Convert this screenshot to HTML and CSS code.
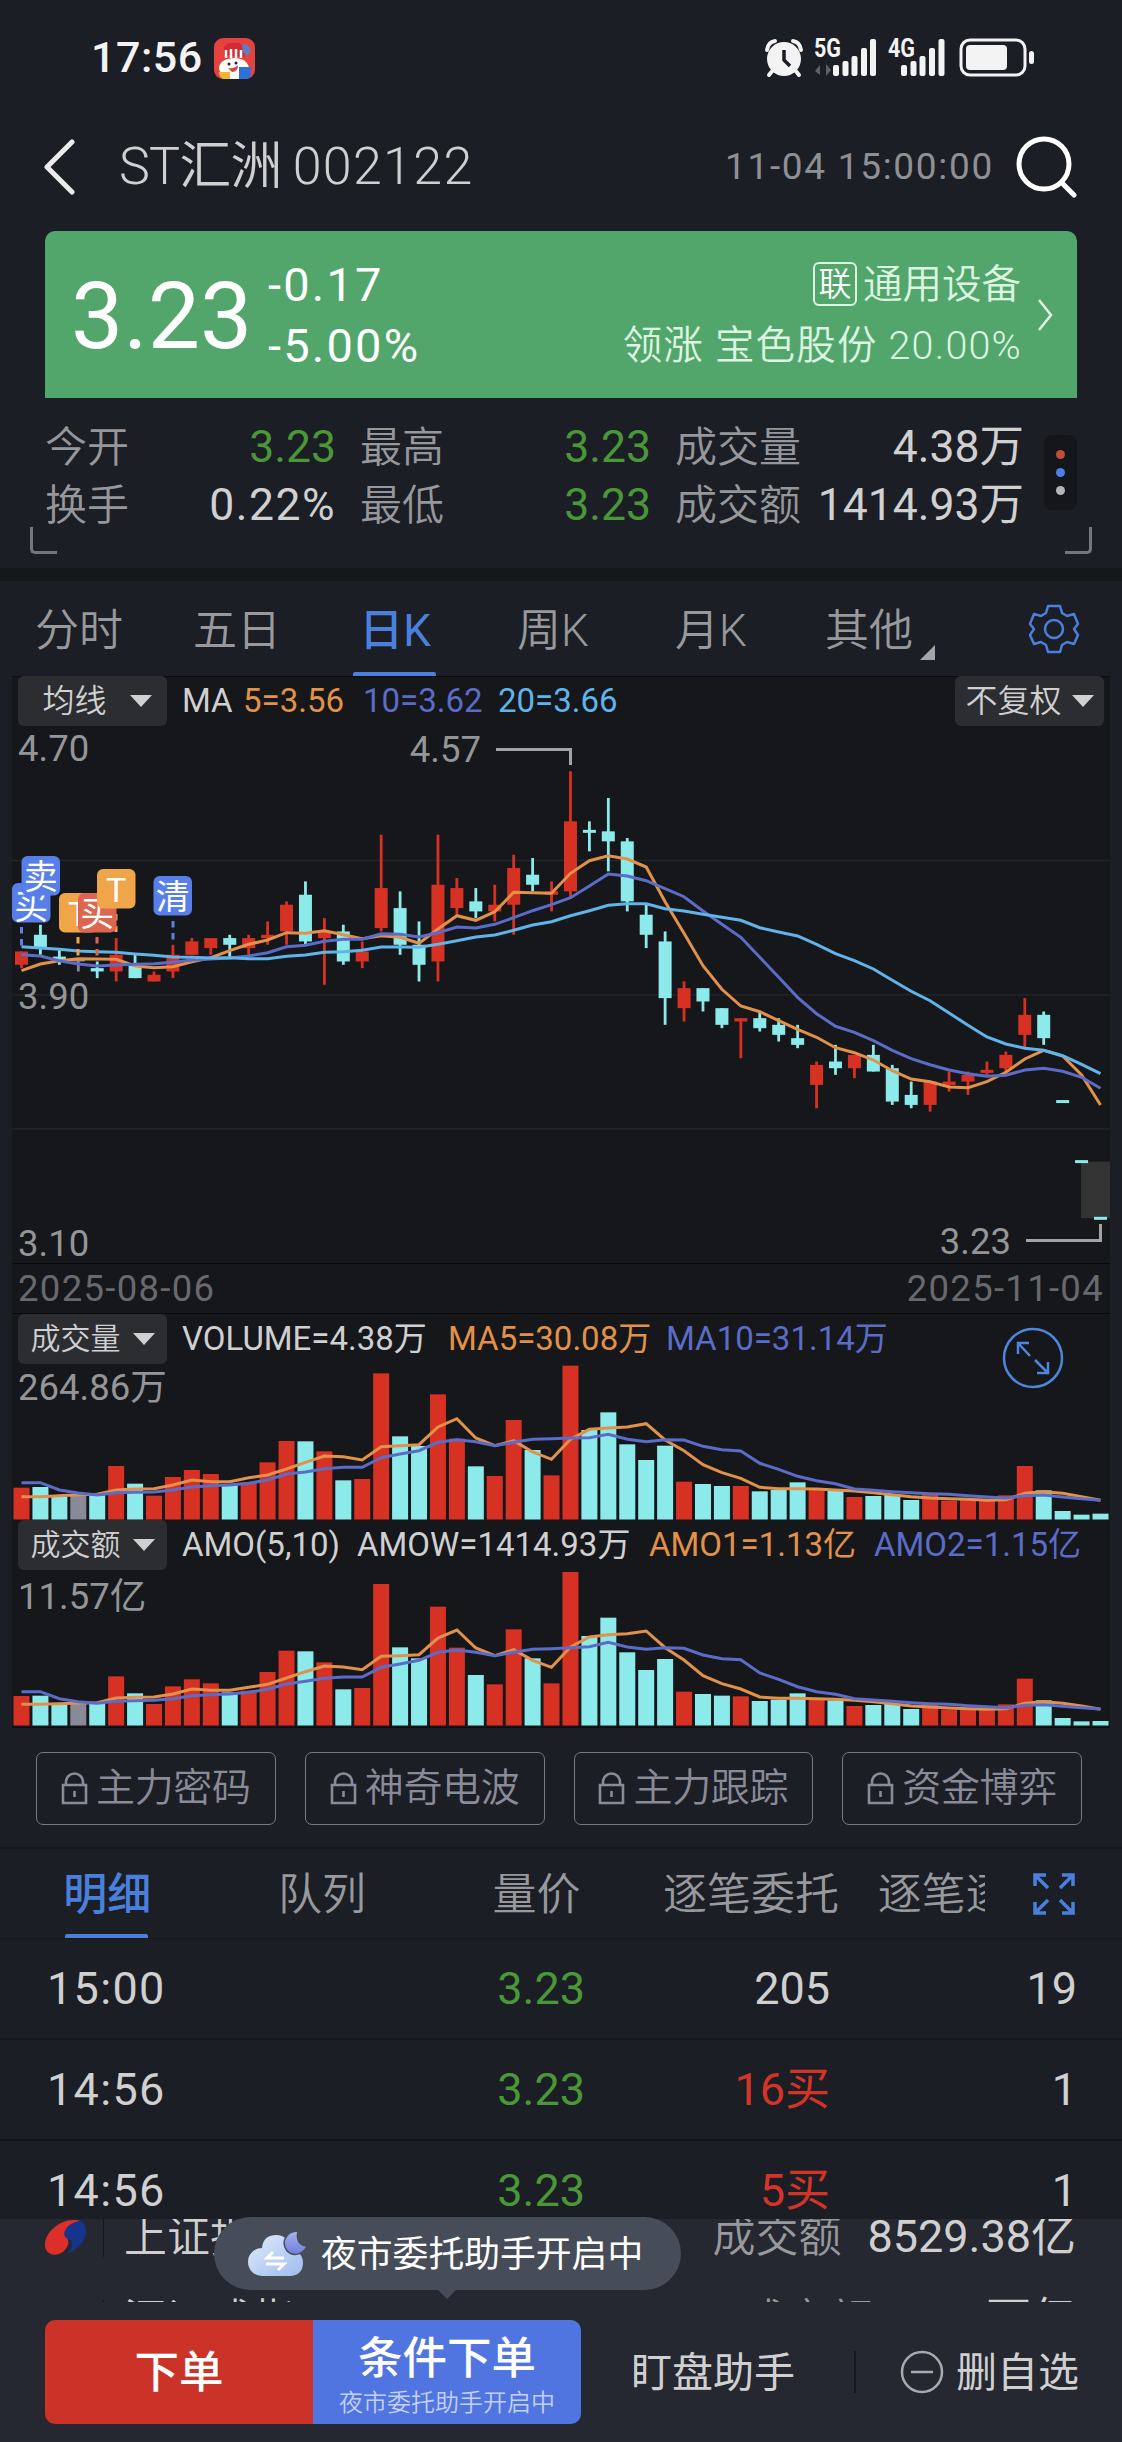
FILE: index.html
```html
<!DOCTYPE html>
<html lang="zh-CN">
<head>
    <meta charset="UTF-8">
    <title>ST汇洲 002122</title>
    <link rel="stylesheet" href="styles.css">
</head>
<body>
<div class="statusbar">
    <span class="clock">17:56</span>
    <svg class="app-icon" width="41" height="41" viewBox="0 0 41 41">
        <rect width="41" height="41" rx="9" fill="#e5413f"/>
        <path d="M10 17V9l4-4h12l5 5v9z" fill="#d42a35"/>
        <path d="M28 6l6 1 3 6-4 5-4-4z" fill="#5b7fc0"/>
        <path d="M5 31q0-10 15-11 13 0 15 10l-3 11H9z" fill="#fff"/>
        <path d="M12 12v8M17 11v9M22 11v9M27 12v8" stroke="#fff" stroke-width="2.5"/>
        <circle cx="15" cy="26" r="1.5" fill="#222"/>
        <circle cx="22" cy="25" r="1.5" fill="#222"/>
        <path d="M14 30q6 1 10-3 0 7-6 7z" fill="#d8443c"/>
        <path d="M5 34h11v7H9q-4-2-4-7z" fill="#f3b52f"/>
        <path d="M25 29h12v9l-4 3h-8z" fill="#2f6fd8"/>
    </svg>
    <svg class="sys-icons" width="272" height="42" viewBox="764 37 272 42" fill="#f3f3f3">
        <circle cx="784" cy="59" r="17"/>
        <path d="M773 70l-4 5M795 70l4 5" stroke="#f3f3f3" stroke-width="4" stroke-linecap="round"/>
        <path d="M767 50q1-8 8-9M801 50q-1-8-8-9" stroke="#f3f3f3" stroke-width="4" fill="none" stroke-linecap="round"/>
        <path d="M784 50v10l6 6" stroke="#1b1e25" stroke-width="3.5" fill="none"/>
        <text x="814" y="57" class="net" textLength="27" lengthAdjust="spacingAndGlyphs">5G</text>
        <path d="M815 71l5-6v10M831 70l-5 6v-12" fill="#606268"/>
        <rect x="833" y="65" width="6" height="11" rx="2"/>
        <rect x="842.500" y="61" width="6" height="15" rx="2"/>
        <rect x="851.500" y="56" width="6" height="20" rx="2"/>
        <rect x="861" y="48" width="6" height="28" rx="2"/>
        <rect x="870" y="39" width="6" height="37" rx="2"/>
        <text x="888" y="57" class="net" textLength="27" lengthAdjust="spacingAndGlyphs">4G</text>
        <rect x="901" y="65" width="6" height="11" rx="2"/>
        <rect x="910.500" y="61" width="6" height="15" rx="2"/>
        <rect x="919.500" y="56" width="6" height="20" rx="2"/>
        <rect x="929" y="48" width="6" height="28" rx="2"/>
        <rect x="938.500" y="39" width="6" height="37" rx="2"/>
        <rect x="961" y="40" width="64" height="35" rx="9" fill="none" stroke="#f3f3f3" stroke-width="3"/>
        <rect x="966" y="45" width="41" height="25" rx="4"/>
        <rect x="1029" y="51" width="5" height="13" rx="2.500"/>
    </svg>
</div>

<div class="header">
    <svg class="back" width="32" height="56" viewBox="0 0 32 56"><path d="M28 3L3 28l25 25" fill="none" stroke="#ececec" stroke-width="5" stroke-linecap="round" stroke-linejoin="round"/></svg>
    <h1>ST汇洲<span>002122</span></h1>
    <span class="time">11-04 15:00:00</span>
    <svg class="search" width="62" height="62" viewBox="0 0 62 62"><circle cx="28" cy="28" r="25" fill="none" stroke="#fff" stroke-width="5"/><path d="M46 47l12 12" stroke="#fff" stroke-width="5" stroke-linecap="round"/></svg>
</div>

<div class="quote">
    <div class="price">3.23</div>
    <div class="change"><div>-0.17</div><div>-5.00%</div></div>
    <div class="sector">
        <div><span class="tag">联</span>通用设备</div>
        <div class="leader">领涨 宝色股份 20.00%</div>
    </div>
    <svg class="arrow" width="16" height="32" viewBox="0 0 16 32"><path d="M2 1l12 15L2 31" fill="none" stroke="#e3f6e8" stroke-width="2.500"/></svg>
</div>

<div class="stats">
    <div class="grid">
        <div class="cell"><label>今开</label><b class="green">3.23</b></div>
        <div class="cell"><label>最高</label><b class="green">3.23</b></div>
        <div class="cell"><label>成交量</label><b>4.38万</b></div>
        <div class="cell"><label>换手</label><b class="pct">0.22%</b></div>
        <div class="cell"><label>最低</label><b class="green">3.23</b></div>
        <div class="cell"><label>成交额</label><b>1414.93万</b></div>
    </div>
    <div class="dots"><i></i><i></i><i></i></div>
    <div class="corner left"></div>
    <div class="corner right"></div>
</div>

<div class="periods">
    <div>分时</div>
    <div>五日</div>
    <div class="active">日K</div>
    <div>周K</div>
    <div>月K</div>
    <div class="more">其他</div>
    <svg class="gear" width="52" height="52" viewBox="0 0 52 52" fill="none" stroke="#4a80dc" stroke-width="2.500" stroke-linejoin="round">
        <path d="M20 3h12l2 7 5 3 7-2 4 10-4 5 4 6-4 9-7-2-5 3-2 7H20l-2-7-5-3-7 2-4-9 4-6-4-5 4-10 7 2 5-3z"/>
        <circle cx="26" cy="26" r="9"/>
    </svg>
</div>

<div class="charts">
    <div class="legend">
        <span class="pick">均线<i></i></span>
        <span class="ma">MA</span>
        <span class="orange v5">5=3.56</span>
        <span class="indigo v10">10=3.62</span>
        <span class="sky v20">20=3.66</span>
        <span class="pick right">不复权<i></i></span>
    </div>
    <svg id="kline" width="1098" height="537" viewBox="12 726 1098 537"></svg>
    <div class="dates"><span>2025-08-06</span><span>2025-11-04</span></div>

    <div class="legend vol">
        <span class="pick">成交量<i></i></span>
        <span class="w1">VOLUME=4.38万</span>
        <span class="orange w2">MA5=30.08万</span>
        <span class="indigo w3">MA10=31.14万</span>
        <svg class="expand" width="62" height="62" viewBox="0 0 62 62" fill="none" stroke="#4f86dd" stroke-width="2.500">
            <circle cx="31" cy="31" r="29"/>
            <path d="M28 29L16 16M16 27V16h11M33 33l13 13M46 35v11H35"/>
        </svg>
    </div>
    <svg id="volume" width="1098" height="157" viewBox="12 1364 1098 157"></svg>

    <div class="legend amo">
        <span class="pick">成交额<i></i></span>
        <span class="a1">AMO(5,10)</span>
        <span class="a2">AMOW=1414.93万</span>
        <span class="orange a3">AMO1=1.13亿</span>
        <span class="indigo a4">AMO2=1.15亿</span>
    </div>
    <svg id="amount" width="1098" height="156" viewBox="12 1571 1098 156"></svg>
</div>

<div class="locks">
    <div><svg width="27" height="34" viewBox="0 0 27 34"><path d="M5 13v-3a8.500 8.500 0 0 1 17 0v3M2 13h23v18H2zM13.500 19v6"/></svg>主力密码</div>
    <div><svg width="27" height="34" viewBox="0 0 27 34"><path d="M5 13v-3a8.500 8.500 0 0 1 17 0v3M2 13h23v18H2zM13.500 19v6"/></svg>神奇电波</div>
    <div><svg width="27" height="34" viewBox="0 0 27 34"><path d="M5 13v-3a8.500 8.500 0 0 1 17 0v3M2 13h23v18H2zM13.500 19v6"/></svg>主力跟踪</div>
    <div><svg width="27" height="34" viewBox="0 0 27 34"><path d="M5 13v-3a8.500 8.500 0 0 1 17 0v3M2 13h23v18H2zM13.500 19v6"/></svg>资金博弈</div>
</div>

<div class="tabs">
    <div class="scroll">
        <div class="active">明细</div>
        <div>队列</div>
        <div>量价</div>
        <div>逐笔委托</div>
        <div>逐笔逐单</div>
    </div>
    <svg width="42" height="42" viewBox="0 0 42 42" fill="none" stroke="#4a80dc" stroke-width="3.500">
        <path d="M15 15L3 3M2 13V2h11M27 15L39 3M29 2h11v11M15 27L3 39M2 29v11h11M27 27l12 12M29 40h11V29"/>
    </svg>
</div>

<div class="trades">
    <div class="row"><span>15:00</span><span class="green">3.23</span><span>205</span><span>19</span></div>
    <div class="row"><span>14:56</span><span class="green">3.23</span><span class="red">16买</span><span>1</span></div>
    <div class="row"><span>14:56</span><span class="green">3.23</span><span class="red">5买</span><span>1</span></div>
</div>

<div class="bottom">
    <div class="ticker">
        <div class="index">
            <svg width="42" height="36" viewBox="0 0 42 36"><path d="M36 2C18-3 0 12 0 26c0 12 16 13 22 2 4-8-2-9-1-15C22 6 29 3 36 2z" fill="#dc2f2a"/><path d="M36 2c9 5 7 24-14 33 6-5 5-9 4-14-6-1-9-6-5-11 3-5 9-7 15-8z" fill="#17348d"/></svg>
            <span class="name">上证指数</span>
            <span class="label">成交额</span><span class="sum">8529.38亿</span>
        </div>
        <div class="index second">
            <svg width="42" height="36" viewBox="0 0 42 36"><path d="M36 2C18-3 0 12 0 26c0 12 16 13 22 2 4-8-2-9-1-15C22 6 29 3 36 2z" fill="#dc2f2a"/></svg>
            <span class="name">深证成指</span>
            <span class="green last">3175.22</span>
            <span class="label">成交额</span><span class="sum">1.07万亿</span>
        </div>
    </div>
    <div class="tip">
        <svg width="60" height="48" viewBox="0 0 60 48">
            <defs>
                <linearGradient id="cloud" x2="1" y2="1"><stop offset="0" stop-color="#e0ebfa"/><stop offset="1" stop-color="#9dbcee"/></linearGradient>
                <linearGradient id="moon" x2="0" y2="1"><stop offset="0" stop-color="#aab0f0"/><stop offset="1" stop-color="#6d7fd8"/></linearGradient>
            </defs>
            <path d="M14 46a14 14 0 0 1 0-28C15 8 21 5 28 5c10 0 14 7 15 15 8 1 12 6 12 13 0 8-5 13-13 13z" fill="url(#cloud)"/>
            <path d="M50 1c-2 9 1 14 9 15-4 9-14 11-20 5-6-8-2-20 11-20z" fill="url(#moon)" stroke="#464d58" stroke-width="1.500"/>
            <path d="M36 28H19l6-6M18 34h18l-6 6" fill="none" stroke="#fff" stroke-width="3"/>
        </svg>
        <span>夜市委托助手开启中</span>
    </div>
    <div class="actions">
        <div class="buy">下单</div>
        <div class="cond">条件下单<small>夜市委托助手开启中</small></div>
        <div class="helper">盯盘助手</div>
        <div class="remove">
            <svg width="44" height="44" viewBox="0 0 44 44" fill="none" stroke="#a9aaad" stroke-width="2.500"><circle cx="22" cy="22" r="20"/><path d="M11 22h22"/></svg>
            <span>删自选</span>
        </div>
    </div>
</div>

<script>
    const RED = "#d73123", CYAN = "#8cebea", GRAY = "#888a98";
    const ORANGE = "#e2914a", INDIGO = "#5b6cc8", SKY = "#60b4ea";

    // high, body top, body bottom, low (in cents), colour
    const candles = [
        [403,403,399,398,"r"],[411,408,404,402,"c"],[404,401,401,399,"c"],[401,401,400,397,"g"],[400,398,397,395,"c"],
        [407,402,397,394,"r"],[402,399,395,395,"c"],[397,396,394,394,"r"],[405,402,397,395,"r"],[407,406,402,402,"r"],
        [407,407,404,402,"r"],[408,407,405,401,"c"],[408,407,404,402,"r"],[412,408,407,405,"r"],[418,417,409,405,"r"],
        [424,420,406,405,"c"],[413,409,407,393,"r"],[411,409,400,399,"c"],[406,403,400,398,"r"],[438,422,410,409,"r"],
        [421,416,405,402,"c"],[412,405,399,394,"c"],[438,423,400,394,"r"],[425,422,416,414,"r"],[422,418,415,413,"c"],
        [423,417,415,412,"r"],[432,428,417,408,"r"],[431,426,423,421,"c"],[424,421,420,415,"r"],[457,442,421,419,"r"],
        [442,439,439,433,"c"],[449,439,436,427,"c"],[437,436,418,415,"c"],[417,414,408,404,"c"],[409,406,389,381,"c"],
        [394,392,386,382,"r"],[392,392,388,385,"c"],[386,386,381,380,"c"],[383,383,382,371,"r"],[385,383,380,379,"c"],
        [383,381,378,376,"c"],[381,377,375,374,"c"],[370,369,363,356,"r"],[375,370,368,366,"c"],[372,372,368,365,"r"],
        [375,372,367,367,"c"],[369,368,358,357,"c"],[364,360,357,356,"c"],[364,364,357,355,"r"],[367,364,363,361,"r"],
        [367,366,364,360,"r"],[370,367.5,366.7,366,"r"],[373,372,368,367,"r"],[389,384,378,374,"r"],[385,384,377,375,"c"],
        [358,358,358,358,"c"],[340,340,340,340,"c"],[323,323,323,323,"c"]
    ];
    const priceMa = {
        20: [650,654,658,663,665,667,672,676,681,682,684,683,686,686,679,675,667,665,661,651,651,652,643,632,621,615,601,585,575,557,542,526,521,521,536,543,553,562,571,593,606,618,643,671,692,717,751,784,812,849,886,921,942,955,961,977,1003,1031],
        5: [722,702,692,686,687,688,708,713,710,695,683,662,643,630,608,610,602,614,626,617,622,640,597,557,571,545,487,488,490,430,392,377,387,411,515,610,707,778,828,845,872,898,922,953,968,990,1022,1047,1055,1071,1073,1055,1027,987,961,978,1035,1125],
        10: [674,678,692,702,708,705,703,701,697,690,687,684,678,668,650,646,634,628,628,611,613,621,608,591,594,583,563,542,524,503,468,432,438,452,476,500,543,583,622,682,742,802,851,889,907,932,961,986,1004,1020,1031,1039,1036,1020,1015,1024,1042,1075]
    };
    const volume = [563,561,590,584,586,498,551,587,531,510,522,552,548,487,423,424,454,541,537,220,409,438,283,416,499,528,360,450,526,197,390,337,433,480,437,545,552,558,558,574,570,547,568,572,591,588,583,600,583,602,598,600,586,498,571,633,644,641];
    const volumeMa5 = [590,590,587,584,583,570,567,566,555,540,545,545,533,525,507,487,468,470,480,440,437,434,381,356,414,437,422,456,478,418,388,384,381,371,420,452,494,518,535,562,566,566,567,570,573,578,584,590,594,596,598,601,599,580,575,580,590,601];
    const volumeMa10 = [548,548,570,579,585,578,577,576,570,561,557,555,550,540,522,516,506,502,502,473,462,452,427,419,425,437,427,418,416,414,413,403,418,425,419,420,439,449,453,490,508,529,542,551,567,571,575,578,581,583,587,591,594,587,585,591,596,601];
    const amount = [1191,1190,1216,1212,1214,1132,1183,1215,1162,1141,1153,1180,1175,1119,1055,1057,1090,1171,1167,855,1045,1078,923,1046,1128,1156,991,1078,1153,819,1011,956,1060,1113,1080,1178,1185,1190,1192,1206,1202,1183,1200,1204,1221,1218,1213,1230,1215,1232,1228,1230,1216,1139,1204,1257,1267,1266];
    const amountMa5 = [1216,1216,1214,1212,1211,1197,1195,1194,1185,1170,1174,1174,1165,1156,1137,1118,1101,1104,1112,1072,1070,1067,1017,993,1047,1070,1052,1084,1105,1044,1014,1007,1004,996,1046,1083,1130,1154,1170,1194,1198,1198,1199,1201,1204,1208,1214,1221,1224,1227,1229,1231,1229,1213,1208,1213,1221,1231];
    const amountMa10 = [1178,1178,1199,1208,1213,1207,1205,1204,1199,1190,1187,1185,1180,1171,1155,1147,1138,1134,1134,1105,1095,1084,1060,1053,1060,1070,1060,1051,1049,1046,1043,1030,1044,1051,1046,1048,1068,1079,1082,1122,1141,1163,1178,1186,1199,1203,1207,1211,1214,1216,1220,1223,1226,1219,1217,1222,1226,1230];

    const colors = { r: RED, c: CYAN, g: GRAY };
    const px = i => 21.5 + i * 18.93;
    const priceY = p => 771.3 + (457 - p) * 3.336;

    function rect(x, y, w, h, fill) {
        return `<rect x="${x}" y="${y}" width="${w}" height="${h}" fill="${fill}"/>`;
    }
    function line(points, base, color) {
        const pts = points.map((v, i) => `${px(i).toFixed(1)},${(base + v / 3).toFixed(1)}`).join(" ");
        return `<polyline points="${pts}" fill="none" stroke="${color}" stroke-width="3"/>`;
    }
    function label(x, y, text, anchor) {
        return `<text x="${x}" y="${y}" class="scale" text-anchor="${anchor || "start"}">${text}</text>`;
    }
    function marker(x, y, text, color, dy) {
        return `<rect x="${x}" y="${y}" width="38.500" height="39.500" rx="6" fill="${color}"/>` +
            `<text x="${x + 19.2}" y="${y + (dy || 32.5)}" class="mark" text-anchor="middle">${text}</text>`;
    }
    function stem(x, y1, y2, color) {
        return `<path d="M${x} ${y1}V${y2}" stroke="${color}" stroke-width="3" stroke-dasharray="6.5 5.5"/>`;
    }

    function drawKline() {
        let s = "";
        [860.3, 994.7, 1128.7].forEach(y => s += rect(12, y - 0.5, 1098, 1.3, "#24262a"));
        s += rect(1081, 1161.7, 29, 56.5, "#333333");
        s += label(18, 761, "4.70") + label(18, 1009, "3.90") + label(18, 1256, "3.10");
        candles.forEach(([hi, top, bot, lo, c], i) => {
            const x = px(i), y1 = priceY(top), h = Math.max(priceY(bot) - y1, 3);
            s += rect(x - 1.4, priceY(hi), 2.8, priceY(lo) - priceY(hi), colors[c]);
            s += rect(x - 6.5, top === bot ? y1 - 1.5 : y1, 13, h, colors[c]);
        });
        s += line(priceMa[5], 730, ORANGE) + line(priceMa[10], 730, INDIGO) + line(priceMa[20], 730, SKY);
        s += stem(21.5, 927, 948, "#5c80ea") + stem(78, 937, 957, "#f0a548") + stem(97, 937, 957, "#e0644c");
        s += stem(116, 914, 932, "#f0a548") + stem(173, 921, 940, "#5c80ea");
        s += marker(12, 883, "买", "#587ee9", 36) + marker(21.5, 856, "卖", "#587ee9");
        s += marker(59, 893, "T", "#f0a548") + marker(78, 893, "买", "#de6650") + marker(97, 869, "T", "#f0a548");
        s += marker(153.5, 876, "清", "#587ee9");
        s += label(481, 762, "4.57", "end") + label(1011, 1254, "3.23", "end");
        s += '<path d="M496 749.500H570.500V765M1026 1240.500H1100.500V1224" fill="none" stroke="#a3a3a3" stroke-width="3"/>';
        document.getElementById("kline").innerHTML = s;
    }

    function drawBars(id, tops, ma5, ma10, bottom, text, textY) {
        let s = label(18, textY, text);
        tops.forEach((v, i) => {
            const y = 1300 + v / 3;
            s += rect(px(i) - 8, y, 16, bottom - y, colors[candles[i][4]]);
        });
        s += line(ma5, 1300, ORANGE) + line(ma10, 1300, INDIGO);
        document.getElementById(id).innerHTML = s;
    }

    drawKline();
    drawBars("volume", volume, volumeMa5, volumeMa10, 1519.5, "264.86万", 1400);
    drawBars("amount", amount, amountMa5, amountMa10, 1726.5, "11.57亿", 1610);
</script>
</body>
</html>
```
FILE: styles.css
```css
* {
    box-sizing: border-box;
}

body {
    margin: 0;
    width: 1122px;
    height: 2442px;
    overflow: hidden;
    background: #1b1e25;
    color: #d0d0d1;
    font-family: Roboto, 'Noto Sans CJK SC', sans-serif;
    font-weight: 400;
    line-height: 1.2;
    position: relative;
}

svg {
    display: block;
    flex: none;
}

.green { color: #4a9737; }
.red { color: #d43428; }
.orange { color: #e2914a; }
.indigo { color: #5b6cc8; }
.sky { color: #60b4ea; }

/* status bar */
.statusbar {
    height: 116px;
    display: flex;
    align-items: center;
    padding: 0 86px 0 91px;
    color: #f3f3f3;
}

.clock {
    font-size: 43px;
    font-weight: 500;
    width: 123px;
    letter-spacing: 0.5px;
}

.sys-icons {
    margin-left: auto;
}

.net {
    font-size: 25px;
    font-weight: 700;
}

/* title row */
.header {
    height: 102px;
    display: flex;
    align-items: center;
    padding: 0 44px;
}

.header h1 {
    margin: 0 0 0 43px;
    font-size: 52px;
    font-weight: 350;
    letter-spacing: -0.8px;
}

.header h1 span {
    margin-left: 11px;
    letter-spacing: 1.3px;
}

.header .time {
    margin-left: auto;
    font-size: 37px;
    letter-spacing: 1.7px;
    color: #8f9094;
}

.header .search {
    margin-left: 22px;
}

/* green quote card */
.quote {
    margin: 13px 45px 0;
    height: 167px;
    padding: 0 24px 0 26px;
    background: #53a66b;
    border-radius: 10px 10px 0 0;
    color: #fff;
    display: flex;
    align-items: center;
}

.price {
    font-size: 93px;
    width: 197px;
    margin-top: 4px;
}

.change {
    font-size: 47px;
    line-height: 61px;
    letter-spacing: 2.2px;
}

.sector {
    margin-left: auto;
    text-align: right;
    font-size: 39.5px;
    font-weight: 350;
    line-height: 61px;
    color: #dcf5e2;
}

.sector > div {
    display: flex;
    align-items: center;
    justify-content: flex-end;
    height: 61px;
    white-space: pre;
}

.sector .leader {
    letter-spacing: 1.2px;
    margin-right: -1px;
}

.tag {
    width: 44px;
    height: 44px;
    margin-right: 6px;
    border: 2px solid #dcf5e2;
    border-radius: 6px;
    font-size: 33px;
    line-height: 41px;
    text-align: center;
    color: #fff;
}

.arrow {
    margin-left: 16px;
}

/* day stats */
.stats {
    height: 170px;
    padding: 20px 45px 0;
    display: flex;
    position: relative;
}

.grid {
    display: grid;
    grid-template-columns: 291px 291px 349px;
    grid-auto-rows: 58.5px;
    column-gap: 24px;
}

.cell {
    display: flex;
    justify-content: space-between;
    align-items: center;
    white-space: nowrap;
}

.cell label {
    font-size: 42px;
    font-weight: 350;
    color: #96979b;
    padding-top: 1px;
}

.cell b {
    font-size: 44.5px;
    font-weight: 400;
}

.cell .pct {
    letter-spacing: 1.5px;
}

.dots {
    width: 33px;
    height: 75px;
    margin: 17px 0 0 20px;
    border-radius: 8px;
    background: #14161b;
    display: flex;
    flex-direction: column;
    align-items: center;
    justify-content: center;
    gap: 9px;
}

.dots i {
    width: 9px;
    height: 9px;
    border-radius: 50%;
    background: #b5b5b5;
}

.dots i:nth-child(1) { background: #c04e38; }
.dots i:nth-child(2) { background: #4a80e8; }

.corner {
    position: absolute;
    top: 129px;
    width: 27px;
    height: 27px;
    border-bottom: 3px solid #74767a;
}

.corner.left {
    left: 30px;
    border-left: 3px solid #74767a;
    border-radius: 0 0 0 5px;
}

.corner.right {
    right: 30px;
    border-right: 3px solid #74767a;
    border-radius: 0 0 5px 0;
}

/* period tabs */
.periods {
    height: 108px;
    border-top: 13px solid #15171b;
    display: grid;
    grid-template-columns: repeat(6, 158px) 1fr;
    align-items: center;
    text-align: center;
    font-size: 44px;
    font-weight: 350;
    color: #98999c;
    line-height: 100px;
}

.periods div {
    height: 95px;
    position: relative;
}

.periods .active,
.tabs .active {
    color: #4a80dc;
    font-weight: 450;
}

.periods .active::after,
.tabs .active::after {
    content: "";
    position: absolute;
    left: 50%;
    bottom: 0;
    width: 83px;
    height: 4px;
    margin-left: -42px;
    border-radius: 2px 2px 0 0;
    background: #4a80dc;
}

.more::after {
    content: "";
    position: absolute;
    right: 13px;
    bottom: 16px;
    border-left: 15px solid transparent;
    border-bottom: 15px solid #a5a5a7;
}

.gear {
    margin-left: 80px;
}

/* chart panel */
.charts {
    margin: 0 12px;
    height: 1052px;
    background: #15171b;
    border-top: 1px solid #0c0d10;
    border-bottom: 1px solid #0c0d10;
}

.legend {
    height: 50px;
    margin-top: -1px;
    padding: 0 6px;
    display: flex;
    align-items: center;
    position: relative;
    font-size: 33px;
    white-space: nowrap;
}

.pick {
    width: 149px;
    height: 50px;
    margin-right: 15px;
    border-radius: 6px;
    background: #2c2d31;
    display: flex;
    align-items: center;
    justify-content: center;
    gap: 12px;
    font-size: 30px;
    font-weight: 350;
}

.pick i {
    border: 11.5px solid transparent;
    border-top: 12px solid #d0d0d1;
    border-bottom: 0;
}

.ma { width: 61px; }
.v5 { width: 120px; }
.v10 { width: 135px; }

.legend:first-child .pick {
    font-size: 32px;
    gap: 23px;
    padding-left: 9px;
}

.legend .pick.right {
    margin: 0 0 0 auto;
    gap: 10px !important;
    padding: 0 !important;
}

.w1 { width: 266px; }
.w2 { width: 218px; }
.a1 { width: 175px; }
.a2 { width: 292px; }
.a3 { width: 225px; }

.legend.vol {
    margin-top: 0;
}

.dates {
    height: 51px;
    border-top: 1px solid #08090b;
    border-bottom: 1px solid #08090b;
    padding: 0 6px;
    display: flex;
    justify-content: space-between;
    align-items: center;
    font-size: 36.5px;
    letter-spacing: 1.3px;
    color: #68696d;
}

.expand {
    position: absolute;
    left: 990px;
    top: 13px;
}

.scale {
    font-size: 36.5px;
    fill: #949597;
}

.mark {
    font-size: 34px;
    fill: #fff;
}

/* locked indicators */
.locks {
    height: 121px;
    padding: 24px 40px 0 36px;
    border-bottom: 2px solid #15171b;
    display: flex;
    gap: 29px;
}

.locks div {
    width: 240px;
    height: 73px;
    border: 1.5px solid #777a86;
    border-radius: 7px;
    display: flex;
    align-items: center;
    justify-content: center;
    gap: 8px;
    font-size: 39px;
    font-weight: 350;
    letter-spacing: -0.3px;
    color: #8a8b99;
    white-space: nowrap;
}

.locks path {
    fill: none;
    stroke: #8a8b99;
    stroke-width: 2.6;
}

/* trade tabs */
.tabs {
    height: 90px;
    border-bottom: 1px solid #15171b;
    display: flex;
    align-items: center;
    color: #98999c;
}

.scroll {
    width: 985px;
    height: 89px;
    margin-right: 48px;
    overflow: hidden;
    display: flex;
    font-size: 44px;
    font-weight: 350;
    line-height: 93px;
    text-align: center;
}

.scroll div {
    flex: 0 0 214.6px;
    position: relative;
}

.row {
    height: 101px;
    padding: 0 45px 0 47px;
    border-bottom: 2px solid #15171b;
    display: grid;
    grid-template-columns: 300px 238px 245px 1fr;
    align-items: center;
    text-align: right;
    font-size: 45px;
}

.row span:first-child {
    text-align: left;
    letter-spacing: 1.3px;
}

/* bottom dock */
.bottom {
    position: absolute;
    left: 0;
    top: 2219px;
    width: 100%;
    height: 223px;
    background: #252731;
}

.ticker {
    height: 83px;
    overflow: hidden;
}

.index {
    height: 81px;
    padding: 0 46px 0 45px;
    display: flex;
    align-items: center;
    font-size: 43px;
    line-height: 40px;
    margin-top: -23px;
}

.index.second {
    margin-top: 2px;
}

.index .name {
    margin-left: 16px;
    padding-left: 20px;
    border-left: 1px solid #15171b;
    font-weight: 350;
}

.index .last {
    margin-left: 50px;
    font-size: 45px;
}

.index .label {
    margin-left: auto;
    margin-right: 26px;
    font-weight: 350;
    color: #98999c;
}

.index .sum {
    font-size: 45px;
}

.tip {
    position: absolute;
    left: 214px;
    top: -2px;
    width: 467px;
    height: 73px;
    border-radius: 37px;
    background: #464d58;
    color: #fff;
    font-size: 35.8px;
    display: flex;
    align-items: center;
    gap: 13px;
    padding-left: 34px;
}

.tip span,
.helper,
.remove span {
    padding-top: 3px;
}

.tip::after {
    content: "";
    position: absolute;
    left: 223px;
    top: 72px;
    border: 10px solid transparent;
    border-top-color: #464d58;
    border-bottom: 0;
}

.actions {
    height: 104px;
    margin: 18px 43px 0 45px;
    display: flex;
    align-items: center;
    font-size: 41px;
}

.buy,
.cond {
    width: 268px;
    height: 104px;
    background: #cb3329;
    border-radius: 10px 0 0 10px;
    color: #fff;
    font-size: 44.5px;
    font-weight: 500;
    line-height: 107px;
    text-align: center;
}

.cond {
    background: #5175e0;
    border-radius: 0 10px 10px 0;
    line-height: 44px;
    padding-top: 17px;
}

.cond small {
    display: block;
    font-size: 24px;
    font-weight: 350;
    line-height: 44px;
    color: #c3d0f7;
}

.helper {
    margin-left: 50px;
}

.remove {
    margin-left: auto;
    display: flex;
    align-items: center;
    gap: 12px;
    position: relative;
}

.remove::before {
    content: "";
    position: absolute;
    left: -46px;
    top: 5px;
    width: 2px;
    height: 42px;
    background: #15171b;
}
```
